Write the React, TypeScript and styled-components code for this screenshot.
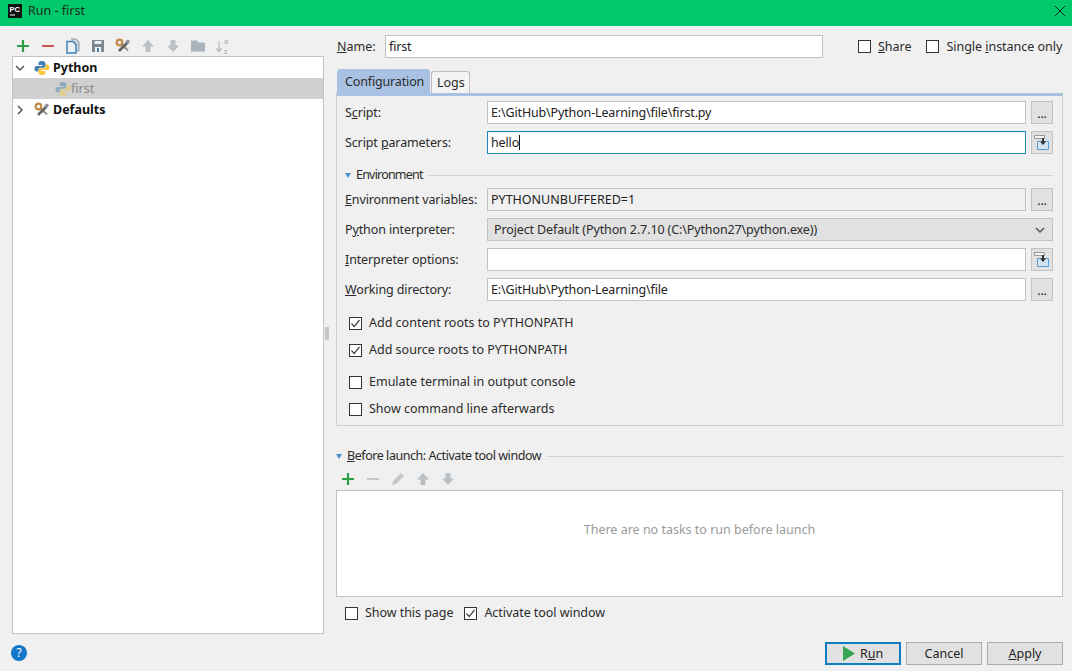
import React from "react";
import styled, { createGlobalStyle } from "styled-components";

const GlobalStyle = createGlobalStyle`
  html, body {
    margin: 0;
    padding: 0;
    background: #f0f0f0;
  }
  * {
    box-sizing: border-box;
  }
`;

const Window = styled.div`
  width: 1072px;
  height: 671px;
  display: flex;
  flex-direction: column;
  overflow: hidden;
  background: #f0f0f0;
  color: #2b2b2b;
  font-family: "Noto Sans", "Open Sans", sans-serif;
  font-size: 12.5px;
  line-height: 18px;
`;

const TitleBar = styled.div`
  height: 26px;
  flex: none;
  display: flex;
  align-items: center;
  padding: 0 6px 5px 8px;
  gap: 6px;
  background: #00c96b;
  color: #1c2b22;
`;

const TitleText = styled.span`
  flex: 1;
`;

const Body = styled.div`
  flex: 1;
  display: flex;
  padding: 9px 9px 6px 12px;
  min-height: 0;
`;

const LeftColumn = styled.div`
  width: 312px;
  flex: none;
  display: flex;
  flex-direction: column;
`;

const Toolbar = styled.div<{ $inset?: boolean }>`
  height: ${({ $inset }) => ($inset ? 20 : 21)}px;
  flex: none;
  display: flex;
  align-items: center;
  gap: 9px;
  padding-left: ${({ $inset }) => ($inset ? 4 : 3)}px;
  margin: ${({ $inset }) => ($inset ? "4px 0 1px" : "0")};
`;

const Tree = styled.div`
  flex: 1;
  background: #fff;
  border: 1px solid #c4c4c4;
`;

const TreeRow = styled.div<{ $selected?: boolean }>`
  height: 21px;
  display: flex;
  align-items: center;
  padding-left: ${({ $selected }) => ($selected ? 42 : 2)}px;
  background: ${({ $selected }) => ($selected ? "#d0d0d0" : "transparent")};
`;

const TreeToggle = styled.span`
  width: 19px;
  flex: none;
  display: flex;
  align-items: center;
`;

const TreeLabel = styled.span<{ $muted?: boolean }>`
  margin-left: ${({ $muted }) => ($muted ? 0 : 3)}px;
  font-weight: ${({ $muted }) => ($muted ? 400 : 700)};
  color: ${({ $muted }) => ($muted ? "#8a8a8a" : "#111")};
`;

const HelpRow = styled.div`
  height: 31px;
  flex: none;
  display: flex;
  align-items: flex-end;
  padding-bottom: 4px;
`;

const HelpButton = styled.div`
  width: 16px;
  height: 16px;
  margin-left: -1px;
  border-radius: 50%;
  background: #1577c9;
  color: #fff;
  font-size: 12px;
  line-height: 16px;
  text-align: center;
`;

const Splitter = styled.div`
  width: 12px;
  flex: none;
  display: flex;
  align-items: center;
  padding: 0 0 34px 1px;
`;

const Grip = styled.div`
  width: 4px;
  height: 13px;
  background-image: radial-gradient(#c2c2c2 0.7px, transparent 0.8px);
  background-size: 2px 2px;
`;

const RightColumn = styled.div`
  flex: 1;
  min-width: 0;
  display: flex;
  flex-direction: column;
`;

const NameRow = styled.div`
  height: 23px;
  flex: none;
  display: flex;
  align-items: center;
  padding-left: 1px;
`;

const NameLabel = styled.span`
  width: 48px;
  flex: none;
`;

const TextBox = styled.div<{ $focused?: boolean; $disabled?: boolean; $width?: number }>`
  height: 23px;
  flex: ${({ $width }) => ($width ? "none" : "1")};
  width: ${({ $width }) => ($width ? `${$width}px` : "auto")};
  display: flex;
  align-items: center;
  padding-left: 3px;
  background: ${({ $disabled }) => ($disabled ? "#f0f0f0" : "#fff")};
  border: 1px solid ${({ $focused }) => ($focused ? "#2086b8" : "#c2c2c2")};
  color: #222;
  letter-spacing: ${({ $disabled }) => ($disabled ? "0" : "-0.15px")};
  white-space: nowrap;
`;

const Caret = styled.span`
  width: 1px;
  height: 15px;
  background: #111;
`;

const TopChecks = styled.div`
  display: flex;
  align-items: center;
  margin-left: 35px;
  gap: 15px;
  letter-spacing: -0.03px;
`;

const CheckWrap = styled.label`
  display: flex;
  align-items: center;
  gap: 7px;
  white-space: nowrap;
`;

const CheckSquare = styled.span`
  width: 13px;
  height: 13px;
  flex: none;
  display: flex;
  align-items: center;
  justify-content: center;
  background: #fff;
  border: 1px solid #333;
`;

const Tabs = styled.div`
  height: 24px;
  flex: none;
  margin-top: 11px;
  display: flex;
  align-items: flex-end;
  padding-left: 1px;
  gap: 1px;
`;

const Tab = styled.div<{ $active?: boolean }>`
  width: ${({ $active }) => ($active ? 93 : 39)}px;
  height: ${({ $active }) => ($active ? 24 : 22)}px;
  display: flex;
  align-items: center;
  padding-left: ${({ $active }) => ($active ? 7 : 5)}px;
  background: ${({ $active }) => ($active ? "#a9c2e4" : "#f4f4f4")};
  border: 1px solid ${({ $active }) => ($active ? "#a9c2e4" : "#bdbdbd")};
  border-bottom: none;
  border-radius: 3px 3px 0 0;
  letter-spacing: ${({ $active }) => ($active ? "-0.15px" : "0")};
`;

const Panel = styled.div`
  height: 333px;
  flex: none;
  display: flex;
  flex-direction: column;
  padding: 5px 9px 0 8px;
  border: 1px solid #cfcfcf;
  border-top: 3px solid #a9c2e4;
`;

const FormRow = styled.div<{ $top?: number }>`
  height: 23px;
  flex: none;
  margin-top: ${({ $top }) => $top ?? 7}px;
  display: flex;
  align-items: center;
`;

const FieldLabel = styled.span`
  width: 142px;
  flex: none;
  white-space: nowrap;
  letter-spacing: -0.12px;
`;

const SideButton = styled.div<{ $dots?: boolean }>`
  width: 22px;
  height: 23px;
  flex: none;
  margin-left: 5px;
  display: flex;
  align-items: center;
  justify-content: center;
  padding-top: ${({ $dots }) => ($dots ? 3 : 0)}px;
  background: #e1e1e1;
  border: 1px solid #c2c2c2;
  color: #111;
  line-height: 12px;
  font-size: 12px;
`;

const Select = styled.div`
  flex: 1;
  height: 23px;
  display: flex;
  align-items: center;
  justify-content: space-between;
  padding: 0 7px 0 6px;
  background: #e1e1e1;
  border: 1px solid #c2c2c2;
  letter-spacing: -0.12px;
`;

const GroupHeader = styled.div<{ $top: number }>`
  height: 18px;
  flex: none;
  margin-top: ${({ $top }) => $top}px;
  display: flex;
  align-items: center;
  gap: 3px;
  white-space: nowrap;
`;

const GroupLine = styled.div`
  flex: 1;
  height: 1px;
  margin-left: 3px;
  background: #d0d0d0;
`;

const Triangle = styled.span`
  width: 0;
  height: 0;
  flex: none;
  margin-right: 2px;
  border-left: 3.5px solid transparent;
  border-right: 3.5px solid transparent;
  border-top: 5px solid #4a8fc9;
`;

const TightTitle = styled.span<{ $spacing: number }>`
  letter-spacing: ${({ $spacing }) => $spacing}px;
`;

const PanelCheck = styled.div<{ $top: number }>`
  height: 18px;
  flex: none;
  margin-top: ${({ $top }) => $top}px;
  padding-left: 4px;
  display: flex;
  align-items: center;
`;

const BeforeLaunch = styled.div`
  margin-top: 21px;
  flex: none;
`;

const TaskBox = styled.div`
  height: 107px;
  flex: none;
  display: flex;
  align-items: center;
  justify-content: center;
  padding-bottom: 28px;
  background: #fff;
  border: 1px solid #c2c2c2;
  color: #9a9a9a;
`;

const BottomChecks = styled.div`
  height: 18px;
  flex: none;
  margin-top: 7px;
  display: flex;
  align-items: center;
  gap: 11px;
  padding-left: 9px;
  letter-spacing: -0.05px;
`;

const Footer = styled.div`
  margin-top: auto;
  height: 23px;
  flex: none;
  display: flex;
  justify-content: flex-end;
  gap: 5px;
`;

const Button = styled.button<{ $primary?: boolean }>`
  width: 76px;
  height: 23px;
  padding: 0;
  display: flex;
  align-items: center;
  justify-content: center;
  gap: 5px;
  font: inherit;
  color: #222;
  background: #e1e1e1;
  border: ${({ $primary }) => ($primary ? "2px solid #0f7cc4" : "1px solid #ababab")};
`;

const Check = ({ checked, children }: { checked?: boolean; children: React.ReactNode }) => (
  <CheckWrap>
    <CheckSquare>
      {checked && (
        <svg width="11" height="11" viewBox="0 0 11 11">
          <path d="M1.5 5.5 L4.2 8.5 L9.5 2" fill="none" stroke="#444" strokeWidth="1.2" />
        </svg>
      )}
    </CheckSquare>
    <span>{children}</span>
  </CheckWrap>
);

const Plus = () => (
  <svg width="16" height="16" viewBox="0 0 16 16">
    <path d="M2 8h12M8 2v12" stroke="#2f9e44" strokeWidth="2.2" />
  </svg>
);

const Minus = ({ color = "#c75450" }: { color?: string }) => (
  <svg width="16" height="16" viewBox="0 0 16 16">
    <path d="M2 8h12" stroke={color} strokeWidth="2" />
  </svg>
);

const CopyIcon = () => (
  <svg width="16" height="16" viewBox="0 0 16 16">
    <path d="M6 1h5l3 3v9h-3" fill="#c9d3db" stroke="#8a97a3" />
    <path d="M2 3.500h6l3 3V15H2z" fill="#e8f0f6" stroke="#3f7fb5" strokeWidth="1.4" />
  </svg>
);

const SaveIcon = () => (
  <svg width="16" height="16" viewBox="0 0 16 16">
    <path d="M2 2h12v12H2z" fill="#7b8791" />
    <path d="M4.500 3h7v3h-7z" fill="#eef1f3" />
    <path d="M5 9h6v5H5z" fill="#eef1f3" />
    <path d="M7 10h2v4H7z" fill="#3f7fb5" />
  </svg>
);

const WrenchIcon = () => (
  <svg width="16" height="16" viewBox="0 0 16 16">
    <circle cx="4.500" cy="4.500" r="2.800" fill="none" stroke="#c08a4a" strokeWidth="2.200" />
    <path d="M6.500 6.500 L10.500 10" stroke="#c08a4a" strokeWidth="2.400" />
    <path d="M12 5 L4 13" stroke="#5f6468" strokeWidth="2.600" />
    <path d="M10 3.500 L13 1.500 L15 3 L13 6.500z" fill="#8e9296" />
    <path d="M10.500 10 L13 12.500" stroke="#8e9296" strokeWidth="2" />
  </svg>
);

const ArrowUp = () => (
  <svg width="16" height="16" viewBox="0 0 16 16">
    <path d="M8 2 L14 8.500 H10.500 V14 H5.500 V8.500 H2z" fill="#b9c0c6" />
  </svg>
);

const ArrowDown = () => (
  <svg width="16" height="16" viewBox="0 0 16 16">
    <path d="M8 14 L2 7.500 H5.500 V2 H10.500 V7.500 H14z" fill="#b9c0c6" />
  </svg>
);

const FolderIcon = () => (
  <svg width="16" height="16" viewBox="0 0 16 16">
    <path d="M1 2.500h6l1.500 2H15V13.500H1z" fill="#aab3bb" />
  </svg>
);

const SortIcon = () => (
  <svg width="16" height="20" viewBox="0 0 16 20">
    <path d="M4 5v10M1.500 12.500 L4 15.500 L6.500 12.500" fill="none" stroke="#b4bbc1" strokeWidth="1.200" />
    <text x="9" y="8" fontSize="7" fill="#9aa2a9">a</text>
    <text x="9" y="17.600" fontSize="7" fill="#9aa2a9">z</text>
  </svg>
);

const PencilIcon = () => (
  <svg width="16" height="16" viewBox="0 0 16 16">
    <path d="M2 14 L3 10 L11 2 L14 5 L6 13z" fill="#c3c8cc" />
  </svg>
);

const snakePath =
  "M8 1C5 1 4.500 2.200 4.500 3.500V5H8.500V6H3C1.300 6 .5 7 .5 8.700C.5 10.500 1.300 11.500 3 11.500H4.500V9.800C4.500 8.500 5.500 7.700 6.700 7.700H9.500C10.700 7.700 11.500 6.900 11.500 5.800V3.500C11.500 2 10.300 1 8 1z";

const PythonIcon = ({ muted }: { muted?: boolean }) => (
  <svg width="16" height="16" viewBox="0 0 16 16" opacity={muted ? 0.45 : 1}>
    <path d={snakePath} fill="#3f7fb5" />
    <path d={snakePath} fill="#f5c93d" transform="rotate(180 8 8)" />
  </svg>
);

const Chevron = ({ open }: { open?: boolean }) => (
  <svg width="10" height="10" viewBox="0 0 10 10">
    <path d={open ? "M1 3 L5 7 L9 3" : "M3 1 L7 5 L3 9"} fill="none" stroke="#555" strokeWidth="1.500" />
  </svg>
);

const InsertIcon = () => (
  <svg width="16" height="16" viewBox="0 0 16 16">
    <path d="M.5 .5h10v3H.5z" fill="#f4f4f4" stroke="#999" />
    <path d="M3.500 6.500h11v8h-11z" fill="#cfe3f3" stroke="#5a9bd0" />
    <path d="M8 3h2v3.500h2L9 10 6 6.500h2z" fill="#333" />
  </svg>
);

const LogoIcon = () => (
  <svg width="14" height="14" viewBox="0 0 14 14">
    <rect width="14" height="14" fill="#111" />
    <text x="1.500" y="8" fontSize="7.500" fontWeight="700" fill="#fff" fontFamily="Liberation Sans">PC</text>
    <rect x="2" y="10.500" width="5" height="1" fill="#fff" />
  </svg>
);

const App = () => {
  return (
    <>
      <GlobalStyle />
      <Window>
        <TitleBar>
          <LogoIcon />
          <TitleText>Run - first</TitleText>
          <svg width="12" height="12" viewBox="0 0 12 12">
            <path d="M1 1 L11 11 M11 1 L1 11" stroke="#1c2b22" strokeWidth="1" />
          </svg>
        </TitleBar>
        <Body>
          <LeftColumn>
            <Toolbar>
              <Plus />
              <Minus />
              <CopyIcon />
              <SaveIcon />
              <WrenchIcon />
              <ArrowUp />
              <ArrowDown />
              <FolderIcon />
              <SortIcon />
            </Toolbar>
            <Tree>
              <TreeRow>
                <TreeToggle>
                  <Chevron open />
                </TreeToggle>
                <PythonIcon />
                <TreeLabel>Python</TreeLabel>
              </TreeRow>
              <TreeRow $selected>
                <PythonIcon muted />
                <TreeLabel $muted>first</TreeLabel>
              </TreeRow>
              <TreeRow>
                <TreeToggle>
                  <Chevron />
                </TreeToggle>
                <WrenchIcon />
                <TreeLabel>Defaults</TreeLabel>
              </TreeRow>
            </Tree>
            <HelpRow>
              <HelpButton>?</HelpButton>
            </HelpRow>
          </LeftColumn>
          <Splitter>
            <Grip />
          </Splitter>
          <RightColumn>
            <NameRow>
              <NameLabel>
                <u>N</u>ame:
              </NameLabel>
              <TextBox $width={438}>first</TextBox>
              <TopChecks>
                <Check>
                  <u>S</u>hare
                </Check>
                <Check>
                  Single <u>i</u>nstance only
                </Check>
              </TopChecks>
            </NameRow>
            <Tabs>
              <Tab $active>Configuration</Tab>
              <Tab>Logs</Tab>
            </Tabs>
            <Panel>
              <FormRow $top={0}>
                <FieldLabel>
                  S<u>c</u>ript:
                </FieldLabel>
                <TextBox>E:\GitHub\Python-Learning\file\first.py</TextBox>
                <SideButton $dots>...</SideButton>
              </FormRow>
              <FormRow>
                <FieldLabel>
                  Script <u>p</u>arameters:
                </FieldLabel>
                <TextBox $focused>
                  hello
                  <Caret />
                </TextBox>
                <SideButton>
                  <InsertIcon />
                </SideButton>
              </FormRow>
              <GroupHeader $top={12}>
                <Triangle />
                <TightTitle $spacing={-0.8}>Environment</TightTitle>
                <GroupLine />
              </GroupHeader>
              <FormRow $top={4}>
                <FieldLabel>
                  <u>E</u>nvironment variables:
                </FieldLabel>
                <TextBox $disabled>PYTHONUNBUFFERED=1</TextBox>
                <SideButton $dots>...</SideButton>
              </FormRow>
              <FormRow>
                <FieldLabel>
                  P<u>y</u>thon interpreter:
                </FieldLabel>
                <Select>
                  Project Default (Python 2.7.10 (C:\Python27\python.exe))
                  <Chevron open />
                </Select>
              </FormRow>
              <FormRow>
                <FieldLabel>
                  <u>I</u>nterpreter options:
                </FieldLabel>
                <TextBox />
                <SideButton>
                  <InsertIcon />
                </SideButton>
              </FormRow>
              <FormRow>
                <FieldLabel>
                  <u>W</u>orking directory:
                </FieldLabel>
                <TextBox>E:\GitHub\Python-Learning\file</TextBox>
                <SideButton $dots>...</SideButton>
              </FormRow>
              <PanelCheck $top={13}>
                <Check checked>Add content roots to PYTHONPATH</Check>
              </PanelCheck>
              <PanelCheck $top={9}>
                <Check checked>Add source roots to PYTHONPATH</Check>
              </PanelCheck>
              <PanelCheck $top={14}>
                <Check>Emulate terminal in output console</Check>
              </PanelCheck>
              <PanelCheck $top={9}>
                <Check>Show command line afterwards</Check>
              </PanelCheck>
            </Panel>
            <BeforeLaunch>
              <GroupHeader $top={0}>
                <Triangle />
                <TightTitle $spacing={-0.45}>
                  <u>B</u>efore launch: Activate tool window
                </TightTitle>
                <GroupLine />
              </GroupHeader>
              <Toolbar $inset>
                <Plus />
                <Minus color="#c3c8cc" />
                <PencilIcon />
                <ArrowUp />
                <ArrowDown />
              </Toolbar>
            </BeforeLaunch>
            <TaskBox>There are no tasks to run before launch</TaskBox>
            <BottomChecks>
              <Check>Show this page</Check>
              <Check checked>Activate tool window</Check>
            </BottomChecks>
            <Footer>
              <Button $primary>
                <svg width="12" height="15" viewBox="0 0 12 15">
                  <path d="M0 0 L12 7.500 L0 15z" fill="#3aa655" />
                </svg>
                <span>
                  R<u>u</u>n
                </span>
              </Button>
              <Button>Cancel</Button>
              <Button>
                <span>
                  <u>A</u>pply
                </span>
              </Button>
            </Footer>
          </RightColumn>
        </Body>
      </Window>
    </>
  );
};

export default App;
